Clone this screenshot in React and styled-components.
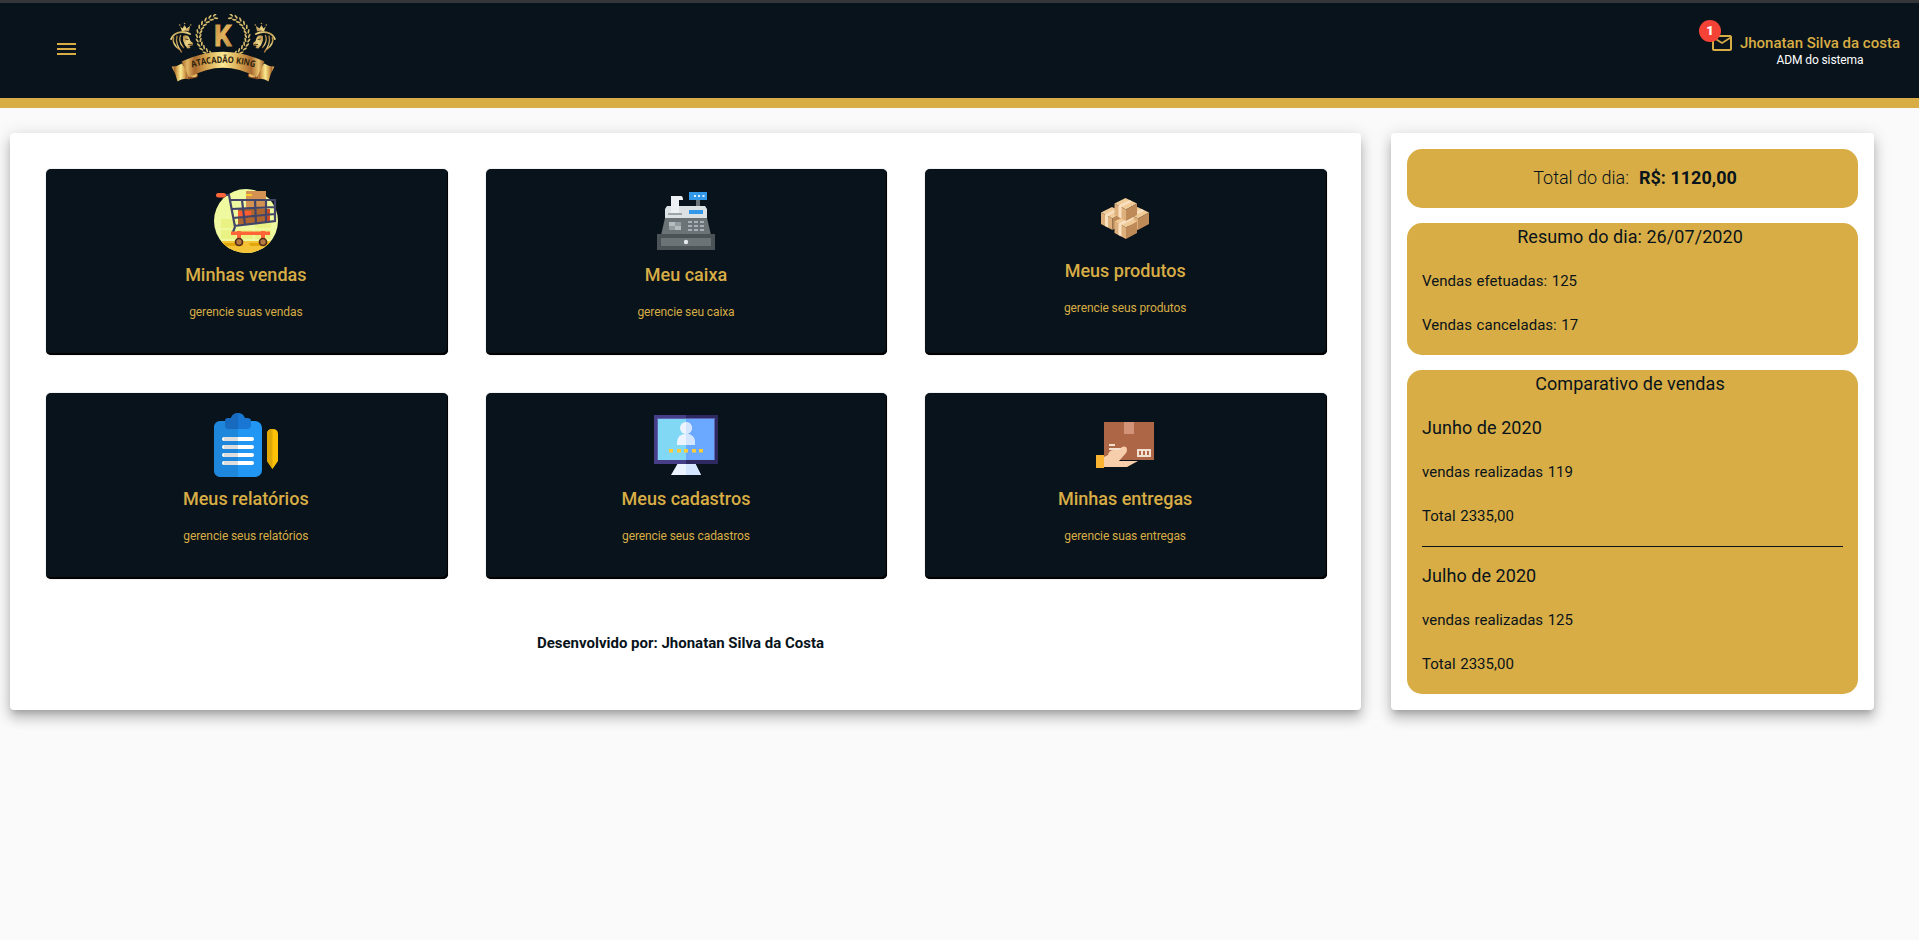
import React from 'react';
import styled, { createGlobalStyle } from 'styled-components';

const GOLD = '#d8ad45';
const NIGHT = '#08131b';

const GlobalStyle = createGlobalStyle`
  * { box-sizing: border-box; }
  body {
    margin: 0;
    min-height: 100vh;
    background: #fafafa;
    color: ${NIGHT};
    font-family: Roboto, 'Liberation Sans', sans-serif;
  }
  h2, h3, p { margin: 0; font-weight: 400; }
`;

const Header = styled.header`
  display: flex;
  align-items: flex-start;
  height: 108px;
  padding: 0 19px 0 54px;
  background: ${NIGHT};
  border-top: 3px solid #35363a;
  border-bottom: 10px solid ${GOLD};
`;

const MenuButton = styled.button`
  display: flex;
  margin-top: 34px;
  padding: 0;
  border: 0;
  background: none;
`;

const Brand = styled.div`
  margin: 11px auto 0 91px;
  line-height: 0;
`;

const MailButton = styled.div`
  position: relative;
  margin: 28px 6px 0 0;
  line-height: 0;
`;

const Badge = styled.span`
  position: absolute;
  top: -11px;
  left: -11px;
  width: 22px;
  height: 22px;
  border-radius: 50%;
  background: #f44336;
  color: #fff;
  font-size: 13px;
  font-weight: 900;
  line-height: 22px;
  text-align: center;
`;

const User = styled.div`
  margin-top: 31px;
  text-align: center;
`;

const UserName = styled.p`
  color: ${GOLD};
  font-size: 15px;
  font-weight: 500;
  line-height: 19px;
`;

const UserRole = styled.p`
  color: #fff;
  font-size: 12px;
  line-height: 14px;
  letter-spacing: -0.1px;
`;

const Main = styled.main`
  display: flex;
  align-items: stretch;
  gap: 30px;
  padding: 25px 45px 0 10px;
`;

const Panel = styled.section`
  background: #fff;
  border-radius: 4px;
  box-shadow: 0 5px 6px -3px rgba(0, 0, 0, 0.22), 0 9px 12px 1px rgba(0, 0, 0, 0.14),
    0 3px 16px 2px rgba(0, 0, 0, 0.12);
`;

const Dashboard = styled(Panel)`
  flex: 1;
  height: 577px;
  padding: 36px 34px 0 36px;
`;

const CardGrid = styled.div`
  display: grid;
  grid-template-columns: repeat(3, 1fr);
  gap: 38px;
`;

const Card = styled.article`
  display: flex;
  flex-direction: column;
  align-items: center;
  height: 186px;
  padding: 20px 2px 0 0;
  background: ${NIGHT};
  border-radius: 5px;
  box-shadow: inset -1px -2px 0 #000, 0 0 1px rgba(0, 0, 0, 0.5);
  color: ${GOLD};
  &:nth-child(3n + 2) { padding-right: 1px; }
`;

const CardTitle = styled.h2`
  margin-top: 8px;
  font-size: 18px;
  font-weight: 500;
  line-height: 28px;
`;

const CardText = styled.p`
  margin-top: 13px;
  font-size: 12px;
  line-height: 20px;
  letter-spacing: -0.1px;
`;

const Credit = styled.p`
  margin: 54px 12px 0 0;
  font-size: 15px;
  font-weight: 700;
  line-height: 20px;
  text-align: center;
`;

const Summary = styled(Panel)`
  display: flex;
  flex-direction: column;
  gap: 15px;
  width: 483px;
  padding: 16px;
`;

const Box = styled.div`
  padding: 0 15px;
  border-radius: 15px;
  background: ${GOLD};
`;

const TotalBox = styled(Box)`
  display: flex;
  justify-content: center;
  gap: 10px;
  padding-left: 20px;
  font-size: 18px;
  font-weight: 300;
  line-height: 58px;
  height: 59px;
  strong { font-weight: 700; }
`;

const BoxTitle = styled.h2`
  padding-bottom: 16px;
  padding-right: 5px;
  font-size: 18px;
  line-height: 28px;
  letter-spacing: 0.06px;
  text-align: center;
`;

const Month = styled.h3`
  padding-bottom: 16px;
  font-size: 18px;
  line-height: 28px;
  letter-spacing: 0.06px;
`;

const Line = styled.p`
  padding-bottom: 16px;
  font-size: 15px;
  line-height: 28px;
  letter-spacing: 0.03px;
  word-spacing: 0.8px;
`;

const Divider = styled.hr`
  height: 1px;
  margin: 0 0 15px;
  border: 0;
  background: ${NIGHT};
`;

const leaves = Array.from({ length: 12 }, (_, i) => {
  const deg = 108 + i * 11.7;
  const a = (deg * Math.PI) / 180;
  return { x: 53 + 24.5 * Math.cos(a), y: 22.5 - 21 * Math.sin(a), r: 90 - deg };
});

const Laurel = () => (
  <g fill="#d6bb6c">
    {leaves.map((l, i) => (
      <g key={i} transform={`translate(${l.x} ${l.y}) rotate(${l.r})`}>
        <ellipse cx="0.6" cy="-1.6" rx="2.400" ry="0.900" transform="rotate(-25)" />
        <ellipse cx="0.6" cy="1.6" rx="2.400" ry="0.900" transform="rotate(25)" />
      </g>
    ))}
  </g>
);

const Lion = () => (
  <g fill="none" stroke="url(#gold)" strokeLinecap="round">
    <path d="M10 12l2.500 2.500L14.500 11l2 3.500 3.500-2.500-1 5.500q-4-1.500-7 0z" fill="url(#gold)" stroke="none" />
    <circle cx="9.500" cy="11" r=".5" strokeWidth=".5" />
    <circle cx="14.500" cy="9.500" r=".5" strokeWidth=".5" />
    <circle cx="20.500" cy="11" r=".5" strokeWidth=".5" />
    <path d="M20 20C14 16.500 4 17.500 1.200 25" strokeWidth="2" />
    <path d="M3.500 23c-1 5 1 9 5.500 12" strokeWidth="1.600" />
    <path d="M7 22c-1.500 5 0 10 4.500 16" strokeWidth="1.300" />
    <path d="M10.500 21.500c-2 4-.5 8 3 12" strokeWidth="1.300" />
    <path d="M13 22q4-2 6 1l1.500 4 2.500 2-.5 2.500-3 .5 1 2-3 .5q-3-3-4.500-8z" fill="url(#gold)" stroke="none" />
    <path d="M15.500 25l2.500.5M18.500 30.500l3 .3" stroke="#3a2a12" strokeWidth=".9" />
  </g>
);

const Tail = () => (
  <g>
    <path d="M1.500 52.500Q6 53 12 49.500L20 61 18 65Q12 64 7.500 67.500 6 60 1.500 52.500Z" fill="url(#ribbon)" />
    <path d="M18 61l9-2q2 2 0 4.500l-9 2z" fill="#8b4d24" />
    <path d="M21 60.500q7-2 6 1.500-2 2-6 1" fill="#e5bd66" />
  </g>
);

const Logo = () => (
  <svg width="106" height="70" viewBox="0 0 106 70">
    <defs>
      <linearGradient id="gold" x1="0" y1="0" x2="1" y2="1">
        <stop offset="0" stopColor="#a87c36" />
        <stop offset=".5" stopColor="#ecd888" />
        <stop offset="1" stopColor="#a87232" />
      </linearGradient>
      <linearGradient id="letter" x1="0" y1="0" x2="1" y2="1">
        <stop offset="0" stopColor="#c28d40" />
        <stop offset=".5" stopColor="#e0b25c" />
        <stop offset="1" stopColor="#b9853c" />
      </linearGradient>
      <linearGradient id="ribbon" x1="0" x2="1">
        <stop offset="0" stopColor="#a8642c" />
        <stop offset=".07" stopColor="#e0b562" />
        <stop offset=".16" stopColor="#a9692f" />
        <stop offset=".3" stopColor="#d6a550" />
        <stop offset=".5" stopColor="#fbea94" />
        <stop offset=".7" stopColor="#d6a550" />
        <stop offset=".84" stopColor="#a9692f" />
        <stop offset=".93" stopColor="#e9c46f" />
        <stop offset="1" stopColor="#9c5c29" />
      </linearGradient>
      <path id="arc" d="M22 53.500Q53 44 85 53.500" />
    </defs>
    <Laurel />
    <g transform="translate(106 0) scale(-1 1)"><Laurel /></g>
    <Lion />
    <g transform="translate(106 0) scale(-1 1)"><Lion /></g>
    <text x="44" y="32" fontFamily="Roboto, sans-serif" fontSize="29" fontWeight="700" textLength="17.500" lengthAdjust="spacingAndGlyphs" fill="url(#letter)" stroke="url(#letter)" strokeWidth=".8">K</text>
    <Tail />
    <g transform="translate(106 0) scale(-1 1)"><Tail /></g>
    <path d="M11.500 47.500Q53 28 94.500 47.500L87 63.500Q53 44 19 63.500Z" fill="url(#ribbon)" />
    <text fontFamily="'Open Sans', sans-serif" fontSize="9" fontWeight="700" fill="#2b210c">
      <textPath href="#arc" textLength="63.500" lengthAdjust="spacingAndGlyphs">ATACADÃO KING</textPath>
    </text>
  </svg>
);

const MenuIcon = () => (
  <svg width="25" height="24" viewBox="0 0 25 24" fill={GOLD}>
    <path d="M3 6h19v2H3zM3 11h19v2H3zM3 16h19v2H3z" />
  </svg>
);

const MailIcon = () => (
  <svg width="24" height="24" viewBox="0 0 24 24" fill={GOLD}>
    <path d="M22 6c0-1.100-.9-2-2-2H4c-1.100 0-2 .9-2 2v12c0 1.100.9 2 2 2h16c1.100 0 2-.9 2-2V6zm-2 0l-8 5-8-5h16zm0 12H4V8l8 5 8-5v10z" />
  </svg>
);

const Icon = ({ children, height = 64 }) => (
  <svg width="64" height={height} viewBox={`0 0 64 ${height}`}>{children}</svg>
);

const CartIcon = () => (
  <Icon>
    <clipPath id="disc"><circle cx="32" cy="32" r="32" /></clipPath>
    <g clipPath="url(#disc)">
      <path d="M0 0h64v64H0z" fill="#eff9a0" />
      <path d="M7 30h15v9H7zM7 41h15v9H7zM24 41h15v9H24zM41 34h16v5H41zM41 41h16v9H41z" fill="#e9f283" />
      <path d="M0 52h64v12H0z" fill="#f4c436" />
      <path d="M9 54h20v3H11zM35 54h21v3H37q-2-1-2-3z" fill="#e2a708" />
    </g>
    <path d="M32 2h20v18H32z" fill="#d39251" />
    <path d="M32 5h6v2h-6z" fill="#fccb2e" />
    <path d="M24 20h32v13l-32 3z" fill="#ad662f" />
    <path d="M24 22h13v7H24z" fill="#ff5d30" />
    <path d="M53 20h3v12h-3z" fill="#cf4b24" />
    <g fill="none" stroke="#434568" strokeWidth="2.200">
      <path d="M10 6h5l6 32-2 5M16 11h45v21l-41 5M18 20l43-2M19 29l42-4M28 11l3 25M41 11l1 24M52 11v22" />
    </g>
    <rect x="2" y="4" width="10" height="4.500" rx="2.200" fill="#ff6536" />
    <path d="M17 42.500h39v3.500H17zM23 42h4v8h-4zM47 42h4v8h-4z" fill="#ff6536" />
    <g fill="#b87a43" stroke="#552c1b" strokeWidth="1.700">
      <circle cx="25" cy="53" r="3.500" /><circle cx="49" cy="53" r="3.500" />
    </g>
  </Icon>
);

const RegisterIcon = () => (
  <Icon>
    <path d="M42 10h4v9h-4z" fill="#6c7377" />
    <path d="M35 3h18v8H35z" fill="#3498e8" />
    <path d="M40 6h2v2h-2zM44 6h2v2h-2zM48.500 6h2v2h-2z" fill="#dceeff" />
    <path d="M13 17h38l2 3v10H11V20z" fill="#dce1e4" />
    <path d="M14 24h14v2H14z" fill="#9ba5aa" />
    <path d="M17 24V7h10q2 0 2 4h-4v13z" fill="#edf1f3" />
    <path d="M35 21h14v4H35z" fill="#3498e8" />
    <path d="M11 29h42l4 17H7z" fill="#6c7377" />
    <path d="M15 33h12v8H15z" fill="#b5bcc0" />
    <path d="M21 33h6v4h-6zM15 37h6v4h-6z" fill="#929ca1" />
    <path d="M34 32h4v2h-4zM40 32h4v2h-4zM46 32h4v2h-4zM34 36h4v2h-4zM40 36h4v2h-4zM46 36h4v2h-4zM34 40h4v2h-4zM40 40h4v2h-4zM46 40h4v2h-4z" fill="#a7b0b5" />
    <path d="M3 45h58v16H3z" fill="#4c5356" />
    <path d="M7 49h50v8H7z" fill="#6c7377" />
    <circle cx="32" cy="53" r="2.200" fill="#e5e9eb" />
  </Icon>
);

const Crate = ({ x, y }) => (
  <g transform={`translate(${x} ${y})`}>
    <path d="M0 5.500L11 0l11.500 5.500L11.500 11.500z" fill="#f0cb98" />
    <path d="M0 5.500l11.500 6V23L0 17z" fill="#deb07c" />
    <path d="M22.500 5.500l-11 6V23l11-6z" fill="#be8a58" />
    <path d="M4 7.600L15 2l3 1.500L7 9.100v11.500L4 19z" fill="#f8dfc0" />
  </g>
);

const BoxesIcon = () => (
  <Icon height={60}>
    <Crate x={8} y={18} />
    <Crate x={33.500} y={18} />
    <Crate x={21.500} y={27} />
    <Crate x={21.500} y={9} />
  </Icon>
);

const ReportIcon = () => (
  <Icon>
    <rect y="8" width="48" height="56" rx="7" fill="#2196f3" />
    <path d="M24 8H7Q0 8 0 15v42q0 7 7 7h17z" fill="#1e87db" />
    <path d="M11 8q0-3 4-3h2Q19 0 24 0t7 5h2q4 0 4 3v4q0 4-4 4H15q-4 0-4-4z" fill="#1976d2" />
    <path d="M24 0q-5 0-7 5h-2q-4 0-4 3v4q0 4 4 4h9z" fill="#176abd" />
    <g stroke="#fff" strokeWidth="4" strokeLinecap="round"><path d="M10 26h28M10 34h28M10 42h28M10 50h28" /></g>
    <g stroke="#dedede" strokeWidth="4"><path d="M10 26h14M10 34h14M10 42h14M10 50h14" /></g>
    <path d="M53 21q0-5 5.500-5t5.500 5v27l-5.500 8-5.500-8z" fill="#ffc107" />
    <path d="M58.500 16Q53 16 53 21v27l5.500 8z" fill="#dfa806" />
  </Icon>
);

const MonitorIcon = () => (
  <Icon>
    <path d="M24 50h17l6 12H17z" fill="#eaf3ff" />
    <path d="M32 50h9l6 12H32z" fill="#d4e5ff" />
    <path d="M0 2h64v49H0z" fill="#463e86" />
    <path d="M32 2h32v49H32z" fill="#2e2960" />
    <path d="M3 5h58v42H3z" fill="#5c66b2" />
    <path d="M4 6h28v41H4z" fill="#80d8f5" />
    <path d="M32 6h28v41H32z" fill="#6aa9ff" />
    <circle cx="32" cy="15" r="6" fill="#edf4ff" />
    <path d="M23 32v-2q0-9 9-9t9 9v2z" fill="#edf4ff" />
    <path d="M32 9a6 6 0 010 12q9 0 9 9v2h-9z" fill="#d4e5ff" />
    <path d="M15 36h4v3.500h-4zM23 36h4v3.500h-4zM30 36h4v3.500h-4zM38 36h4v3.500h-4zM45 36h4v3.500h-4z" fill="#ffcd35" />
  </Icon>
);

const DeliveryIcon = () => (
  <Icon>
    <g transform="translate(3 0)">
      <path d="M8 9h50v38H8z" fill="#ad6747" />
      <path d="M28 9h10v12H28z" fill="#d39378" />
      <path d="M13 31h6v2h-6zM13 35h12v2H13z" fill="#f2dfd0" />
      <path d="M41 36h14v8H41z" fill="#f2dfd0" />
      <path d="M43 38h2v4h-2zM47 38h2v4h-2zM51 38h2v4h-2z" fill="#ad6747" />
      <path d="M8 44l4-2q1-5 6-5h5l3-3q2-1 4 0 2 3 0 6l-7 8h19l-11 6H8z" fill="#f7ceab" />
      <path d="M0 42h8v13H0z" fill="#fbb431" />
    </g>
  </Icon>
);

const cards = [
  { title: 'Minhas vendas', text: 'gerencie suas vendas', Art: CartIcon },
  { title: 'Meu caixa', text: 'gerencie seu caixa', Art: RegisterIcon },
  { title: 'Meus produtos', text: 'gerencie seus produtos', Art: BoxesIcon },
  { title: 'Meus relatórios', text: 'gerencie seus relatórios', Art: ReportIcon },
  { title: 'Meus cadastros', text: 'gerencie seus cadastros', Art: MonitorIcon },
  { title: 'Minhas entregas', text: 'gerencie suas entregas', Art: DeliveryIcon },
];

export default function App() {
  return (
    <>
      <GlobalStyle />
      <Header>
        <MenuButton aria-label="Menu"><MenuIcon /></MenuButton>
        <Brand><Logo /></Brand>
        <MailButton>
          <MailIcon />
          <Badge>1</Badge>
        </MailButton>
        <User>
          <UserName>Jhonatan Silva da costa</UserName>
          <UserRole>ADM do sistema</UserRole>
        </User>
      </Header>
      <Main>
        <Dashboard>
          <CardGrid>
            {cards.map(({ title, text, Art }) => (
              <Card key={title}>
                <Art />
                <CardTitle>{title}</CardTitle>
                <CardText>{text}</CardText>
              </Card>
            ))}
          </CardGrid>
          <Credit>Desenvolvido por: Jhonatan Silva da Costa</Credit>
        </Dashboard>
        <Summary>
          <TotalBox>
            <span>Total do dia:</span>
            <strong>R$: 1120,00</strong>
          </TotalBox>
          <Box>
            <BoxTitle>Resumo do dia: 26/07/2020</BoxTitle>
            <Line>Vendas efetuadas: 125</Line>
            <Line>Vendas canceladas: 17</Line>
          </Box>
          <Box>
            <BoxTitle>Comparativo de vendas</BoxTitle>
            <Month>Junho de 2020</Month>
            <Line>vendas realizadas 119</Line>
            <Line>Total 2335,00</Line>
            <Divider />
            <Month>Julho de 2020</Month>
            <Line>vendas realizadas 125</Line>
            <Line>Total 2335,00</Line>
          </Box>
        </Summary>
      </Main>
    </>
  );
}
